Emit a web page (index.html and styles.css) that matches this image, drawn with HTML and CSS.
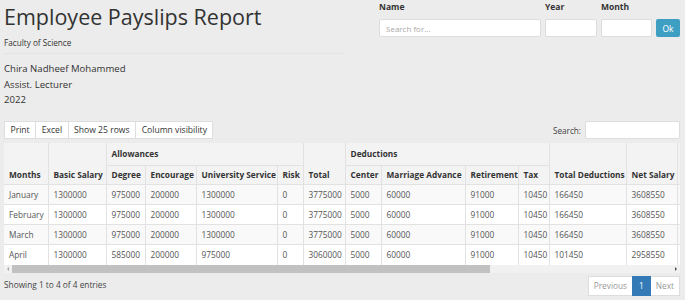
FILE: index.html
```html
<!DOCTYPE html>
<html lang="en">
<head>
<meta charset="utf-8">
<title>Employee Payslips Report</title>
<link rel="stylesheet" href="styles.css">
</head>
<body>
<div class="top">
  <div class="heading">
    <h1 class="title">Employee Payslips Report</h1>
    <div class="faculty">Faculty of Science</div>
    <div class="info">
      <div>Chira Nadheef Mohammed</div>
      <div>Assist. Lecturer</div>
      <div>2022</div>
    </div>
  </div>
  <form class="filters">
    <div class="field f-name"><label>Name</label><input type="text" placeholder="Search for..."></div>
    <div class="field f-year"><label>Year</label><input type="text"></div>
    <div class="field f-month"><label>Month</label><input type="text"></div>
    <button type="button" class="ok">Ok</button>
  </form>
</div>

<div class="toolbar">
  <div class="btn-group">
    <button type="button" class="tbtn">Print</button><button type="button" class="tbtn">Excel</button><button type="button" class="tbtn">Show 25 rows</button><button type="button" class="tbtn">Column visibility</button>
  </div>
  <label class="search">Search: <input type="search"></label>
</div>

<div class="scroller">
  <table class="grid">
    <colgroup>
      <col class="c44"><col class="c58"><col class="c39"><col class="c51"><col class="c81"><col class="c26"><col class="c42"><col class="c36"><col class="c84"><col class="c53"><col class="c31"><col class="c77"><col class="c51"><col class="c130"><col class="c132">
    </colgroup>
    <thead>
      <tr class="h1">
        <th rowspan="2">Months</th>
        <th rowspan="2">Basic Salary</th>
        <th colspan="4" class="grp">Allowances</th>
        <th rowspan="2">Total</th>
        <th colspan="4" class="grp">Deductions</th>
        <th rowspan="2">Total Deductions</th>
        <th rowspan="2">Net Salary</th>
        <th rowspan="2"></th>
        <th rowspan="2"></th>
      </tr>
      <tr class="h2">
        <th>Degree</th><th>Encourage</th><th>University Service</th><th>Risk</th>
        <th>Center</th><th>Marriage Advance</th><th>Retirement</th><th>Tax</th>
      </tr>
    </thead>
    <tbody>
      <tr><td>January</td><td>1300000</td><td>975000</td><td>200000</td><td>1300000</td><td>0</td><td>3775000</td><td>5000</td><td>60000</td><td>91000</td><td>10450</td><td>166450</td><td>3608550</td><td></td><td></td></tr>
      <tr><td>February</td><td>1300000</td><td>975000</td><td>200000</td><td>1300000</td><td>0</td><td>3775000</td><td>5000</td><td>60000</td><td>91000</td><td>10450</td><td>166450</td><td>3608550</td><td></td><td></td></tr>
      <tr><td>March</td><td>1300000</td><td>975000</td><td>200000</td><td>1300000</td><td>0</td><td>3775000</td><td>5000</td><td>60000</td><td>91000</td><td>10450</td><td>166450</td><td>3608550</td><td></td><td></td></tr>
      <tr class="last"><td>April</td><td>1300000</td><td>585000</td><td>200000</td><td>975000</td><td>0</td><td>3060000</td><td>5000</td><td>60000</td><td>91000</td><td>10450</td><td>101450</td><td>2958550</td><td></td><td></td></tr>
    </tbody>
  </table>
</div>
<div class="hscroll" aria-hidden="true">
  <span class="arrow left"></span>
  <span class="thumb"></span>
  <span class="track"></span>
  <span class="arrow right"></span>
</div>

<div class="footer">
  <div class="entries">Showing 1 to 4 of 4 entries</div>
  <div class="pager">
    <span class="pg disabled">Previous</span><span class="pg active">1</span><span class="pg disabled">Next</span>
  </div>
</div>
</body>
</html>
```

FILE: styles.css
```css
html, body {
  margin: 0;
  background: #ececec;
}
body {
  padding: 0 5px 0 4px;
  font-family: "Open Sans", "DejaVu Sans", sans-serif;
  color: #333;
  font-size: 9px;
}
.top {
  display: flex;
  justify-content: space-between;
  height: 121px;
}
.heading {
  width: 340px;
}
.title {
  margin: 0;
  font-size: 21.5px;
  font-weight: 400;
  line-height: 34px;
  color: #333;
}
.faculty {
  font-size: 8.2px;
  line-height: 14px;
  margin-top: 2px;
  padding-bottom: 3px;
  border-bottom: 1px solid #e4e4e4;
}
.info {
  margin-top: 7px;
  font-size: 9.6px;
  line-height: 15.5px;
  color: #333;
}
.filters {
  display: flex;
  align-items: flex-end;
  gap: 4px;
  height: 37px;
}
.field {
  display: flex;
  flex-direction: column;
}
.field label {
  font-weight: 700;
  font-size: 8.5px;
  line-height: 14px;
  margin-bottom: 5px;
}
.field input {
  box-sizing: border-box;
  height: 18px;
  border: 1px solid #ddd;
  border-radius: 2px;
  background: #fff;
  padding: 0 6px;
  font: inherit;
  font-size: 8px;
  outline: none;
}
.field input::placeholder { color: #aaa; }
.f-name input { width: 162px; }
.f-year input { width: 52px; }
.f-month input { width: 51px; }
.ok {
  box-sizing: border-box;
  height: 18px;
  width: 24px;
  border: none;
  border-radius: 2px;
  background: #3f9fc3;
  color: #fff;
  font: inherit;
  font-size: 8.5px;
  padding: 0;
}
.toolbar {
  display: flex;
  justify-content: space-between;
  align-items: center;
  height: 18px;
  margin-bottom: 4px;
}
.btn-group {
  display: flex;
}
.tbtn {
  box-sizing: border-box;
  height: 18px;
  background: #fff;
  border: 1px solid #ddd;
  margin-left: -1px;
  padding: 0 5.5px;
  font: inherit;
  font-size: 8.6px;
  color: #333;
}
.tbtn:first-child { margin-left: 0; }
.search {
  display: flex;
  align-items: center;
  gap: 4px;
  font-size: 8.2px;
  color: #444;
}
.search input {
  box-sizing: border-box;
  width: 95px;
  height: 18px;
  border: 1px solid #ddd;
  background: #fff;
  border-radius: 2px;
  outline: none;
}
.scroller {
  overflow: hidden;
  background: #fff;
}
.grid {
  table-layout: fixed;
  border-collapse: collapse;
  width: 935px;
  font-size: 8.3px;
}
.c26 { width: 26px; } .c31 { width: 31px; } .c36 { width: 36px; } .c39 { width: 39px; }
.c42 { width: 42px; } .c44 { width: 44px; } .c51 { width: 51px; } .c53 { width: 53px; }
.c58 { width: 58px; } .c77 { width: 77px; } .c81 { width: 81px; } .c84 { width: 84px; }
.c130 { width: 130px; } .c132 { width: 132px; }
.grid th, .grid td {
  border: 1px solid #e2e2e2;
  padding: 0 5px;
  text-align: left;
  white-space: nowrap;
  overflow: hidden;
}
.grid thead th {
  background: #f3f3f3;
  font-weight: 700;
  color: #333;
  vertical-align: bottom;
  padding-bottom: 4px;
}
.grid thead .h1 { height: 22px; }
.grid thead .h1 th.grp { vertical-align: middle; padding-bottom: 0; }
.grid thead .h2 { height: 19px; }
.grid thead tr:first-child th { border-top: none; }
.grid tbody tr { height: 20px; }
.grid tbody tr.last { height: 21px; }
.grid tbody td {
  color: #555;
  background: #fff;
}
.grid tbody tr:nth-child(odd) td { background: #f9f9f9; }
.grid tbody tr.last td { border-bottom: none; }
.grid th:first-child, .grid td:first-child { border-left: none; }
.hscroll {
  display: flex;
  align-items: center;
  height: 8px;
  background: #f1f1f1;
}
.thumb {
  width: 478px;
  height: 8px;
  background: #c1c1c1;
}
.track { flex: 1; }
.arrow {
  width: 8px;
  height: 8px;
  display: flex;
  align-items: center;
  justify-content: center;
}
.arrow::before {
  content: "";
  border-top: 2px solid transparent;
  border-bottom: 2px solid transparent;
}
.arrow.left::before { border-right: 2px solid #a3a3a3; }
.arrow.right::before { border-left: 2px solid #505050; }
.footer {
  display: flex;
  justify-content: space-between;
  align-items: flex-start;
  margin-top: 3px;
}
.entries {
  font-size: 8.3px;
  line-height: 18px;
  color: #444;
}
.pager {
  display: flex;
}
.pg {
  box-sizing: border-box;
  height: 20px;
  line-height: 18px;
  padding: 0 5px;
  border: 1px solid #ddd;
  margin-left: -1px;
  background: #fff;
  font-size: 8.3px;
  color: #999;
}
.pg.active {
  padding: 0 6px;
  background: #337ab7;
  border-color: #337ab7;
  color: #fff;
  position: relative;
}
```
